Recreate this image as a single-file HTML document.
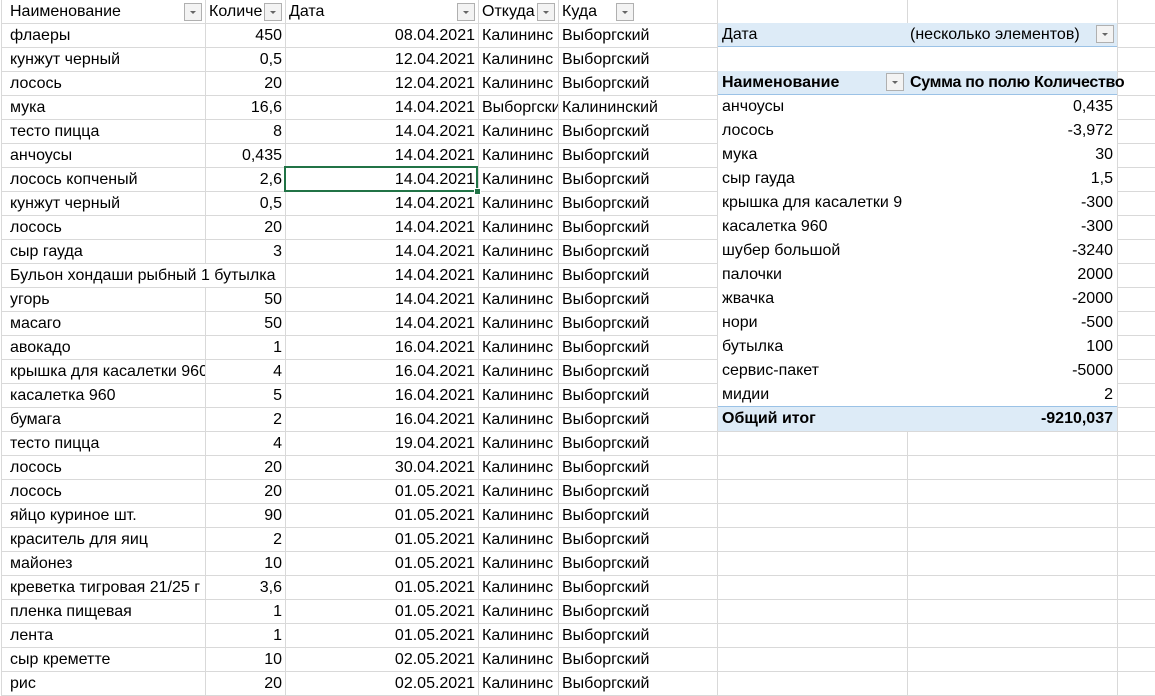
<!DOCTYPE html>
<html><head><meta charset="utf-8"><style>
body{margin:0;width:1155px;height:690px;overflow:hidden;background:#fff;font-family:"Liberation Sans",Arial,sans-serif;font-size:16px;color:#000;position:relative}
table{position:absolute;left:1px;top:-1px;border-collapse:collapse;table-layout:fixed;width:1157px}
td{height:23px;padding:0 3px;border:1px solid #d9d9d9;white-space:nowrap;overflow:hidden;line-height:23px}
td:first-child{padding-left:8px}
td.r{text-align:right}
.fb{position:absolute;width:16px;height:16px;border:1px solid #b0b0b0;background:#f3f3f3;top:3px}
.fb:after{content:"";position:absolute;left:5px;top:7px;border-left:3px solid transparent;border-right:3px solid transparent;border-top:3px solid #666}
#pv{position:absolute;left:718px;top:23px;width:399px;height:408px;background:#fff;white-space:nowrap}
.pr{position:absolute;left:0;width:399px;height:24px;line-height:24px}
.pr span{position:absolute;left:4px}
.pr b.v,.pr span.v{position:absolute;right:4px;left:auto}
.blue{background:#ddebf7}
#sel{position:absolute;left:284px;top:166px;width:190px;height:22px;border:2px solid #217346}
#sel:after{content:"";position:absolute;right:-5px;bottom:-5px;width:5px;height:5px;background:#217346;border:1px solid #fff}
</style></head><body>
<table>
<colgroup><col style="width:204px"><col style="width:80px"><col style="width:193px"><col style="width:80px"><col style="width:159px"><col style="width:190px"><col style="width:210px"><col style="width:41px"></colgroup>
<tr><td>Наименование</td><td>Количе</td><td>Дата</td><td>Откуда</td><td>Куда</td><td></td><td></td><td></td></tr>
<tr><td>флаеры</td><td class="r">450</td><td class="r">08.04.2021</td><td>Калининс</td><td>Выборгский</td><td></td><td></td><td></td></tr>
<tr><td>кунжут черный</td><td class="r">0,5</td><td class="r">12.04.2021</td><td>Калининс</td><td>Выборгский</td><td></td><td></td><td></td></tr>
<tr><td>лосось</td><td class="r">20</td><td class="r">12.04.2021</td><td>Калининс</td><td>Выборгский</td><td></td><td></td><td></td></tr>
<tr><td>мука</td><td class="r">16,6</td><td class="r">14.04.2021</td><td>Выборгски</td><td>Калининский</td><td></td><td></td><td></td></tr>
<tr><td>тесто пицца</td><td class="r">8</td><td class="r">14.04.2021</td><td>Калининс</td><td>Выборгский</td><td></td><td></td><td></td></tr>
<tr><td>анчоусы</td><td class="r">0,435</td><td class="r">14.04.2021</td><td>Калининс</td><td>Выборгский</td><td></td><td></td><td></td></tr>
<tr><td>лосось копченый</td><td class="r">2,6</td><td class="r">14.04.2021</td><td>Калининс</td><td>Выборгский</td><td></td><td></td><td></td></tr>
<tr><td>кунжут черный</td><td class="r">0,5</td><td class="r">14.04.2021</td><td>Калининс</td><td>Выборгский</td><td></td><td></td><td></td></tr>
<tr><td>лосось</td><td class="r">20</td><td class="r">14.04.2021</td><td>Калининс</td><td>Выборгский</td><td></td><td></td><td></td></tr>
<tr><td>сыр гауда</td><td class="r">3</td><td class="r">14.04.2021</td><td>Калининс</td><td>Выборгский</td><td></td><td></td><td></td></tr>
<tr><td colspan="2">Бульон хондаши рыбный 1 бутылка</td><td class="r">14.04.2021</td><td>Калининс</td><td>Выборгский</td><td></td><td></td><td></td></tr>
<tr><td>угорь</td><td class="r">50</td><td class="r">14.04.2021</td><td>Калининс</td><td>Выборгский</td><td></td><td></td><td></td></tr>
<tr><td>масаго</td><td class="r">50</td><td class="r">14.04.2021</td><td>Калининс</td><td>Выборгский</td><td></td><td></td><td></td></tr>
<tr><td>авокадо</td><td class="r">1</td><td class="r">16.04.2021</td><td>Калининс</td><td>Выборгский</td><td></td><td></td><td></td></tr>
<tr><td>крышка для касалетки 960</td><td class="r">4</td><td class="r">16.04.2021</td><td>Калининс</td><td>Выборгский</td><td></td><td></td><td></td></tr>
<tr><td>касалетка 960</td><td class="r">5</td><td class="r">16.04.2021</td><td>Калининс</td><td>Выборгский</td><td></td><td></td><td></td></tr>
<tr><td>бумага</td><td class="r">2</td><td class="r">16.04.2021</td><td>Калининс</td><td>Выборгский</td><td></td><td></td><td></td></tr>
<tr><td>тесто пицца</td><td class="r">4</td><td class="r">19.04.2021</td><td>Калининс</td><td>Выборгский</td><td></td><td></td><td></td></tr>
<tr><td>лосось</td><td class="r">20</td><td class="r">30.04.2021</td><td>Калининс</td><td>Выборгский</td><td></td><td></td><td></td></tr>
<tr><td>лосось</td><td class="r">20</td><td class="r">01.05.2021</td><td>Калининс</td><td>Выборгский</td><td></td><td></td><td></td></tr>
<tr><td>яйцо куриное шт.</td><td class="r">90</td><td class="r">01.05.2021</td><td>Калининс</td><td>Выборгский</td><td></td><td></td><td></td></tr>
<tr><td>краситель для яиц</td><td class="r">2</td><td class="r">01.05.2021</td><td>Калининс</td><td>Выборгский</td><td></td><td></td><td></td></tr>
<tr><td>майонез</td><td class="r">10</td><td class="r">01.05.2021</td><td>Калининс</td><td>Выборгский</td><td></td><td></td><td></td></tr>
<tr><td>креветка тигровая 21/25 г</td><td class="r">3,6</td><td class="r">01.05.2021</td><td>Калининс</td><td>Выборгский</td><td></td><td></td><td></td></tr>
<tr><td>пленка пищевая</td><td class="r">1</td><td class="r">01.05.2021</td><td>Калининс</td><td>Выборгский</td><td></td><td></td><td></td></tr>
<tr><td>лента</td><td class="r">1</td><td class="r">01.05.2021</td><td>Калининс</td><td>Выборгский</td><td></td><td></td><td></td></tr>
<tr><td>сыр креметте</td><td class="r">10</td><td class="r">02.05.2021</td><td>Калининс</td><td>Выборгский</td><td></td><td></td><td></td></tr>
<tr><td>рис</td><td class="r">20</td><td class="r">02.05.2021</td><td>Калининс</td><td>Выборгский</td><td></td><td></td><td></td></tr>
</table>
<div class="fb" style="left:184px"></div>
<div class="fb" style="left:264px"></div>
<div class="fb" style="left:457px"></div>
<div class="fb" style="left:537px"></div>
<div class="fb" style="left:616px"></div>
<div id="sel"></div>
<div id="pv">
<div class="pr blue" style="top:0;border-bottom:1px solid #9bc2e6;height:23px"><span>Дата</span><span style="left:192px">(несколько элементов)</span><div class="fb" style="left:378px;top:2px"></div></div>
<div class="pr blue" style="top:48px;border-bottom:1px solid #9bc2e6;height:23px"><b style="position:absolute;left:4px">Наименование</b><div class="fb" style="left:168px;top:2px"></div><b style="position:absolute;left:192px;letter-spacing:-0.3px">Сумма по полю Количество</b></div>
<div class="pr" style="top:72px"><span>анчоусы</span><span class="v">0,435</span></div>
<div class="pr" style="top:96px"><span>лосось</span><span class="v">-3,972</span></div>
<div class="pr" style="top:120px"><span>мука</span><span class="v">30</span></div>
<div class="pr" style="top:144px"><span>сыр гауда</span><span class="v">1,5</span></div>
<div class="pr" style="top:168px"><span>крышка для касалетки 9</span><span class="v">-300</span></div>
<div class="pr" style="top:192px"><span>касалетка 960</span><span class="v">-300</span></div>
<div class="pr" style="top:216px"><span>шубер большой</span><span class="v">-3240</span></div>
<div class="pr" style="top:240px"><span>палочки</span><span class="v">2000</span></div>
<div class="pr" style="top:264px"><span>жвачка</span><span class="v">-2000</span></div>
<div class="pr" style="top:288px"><span>нори</span><span class="v">-500</span></div>
<div class="pr" style="top:312px"><span>бутылка</span><span class="v">100</span></div>
<div class="pr" style="top:336px"><span>сервис-пакет</span><span class="v">-5000</span></div>
<div class="pr" style="top:360px"><span>мидии</span><span class="v">2</span></div>
<div class="pr blue" style="top:383px;border-top:1px solid #9bc2e6;height:24px"><b style="position:absolute;left:4px">Общий итог</b><b class="v">-9210,037</b></div>
</div>
</body></html>
